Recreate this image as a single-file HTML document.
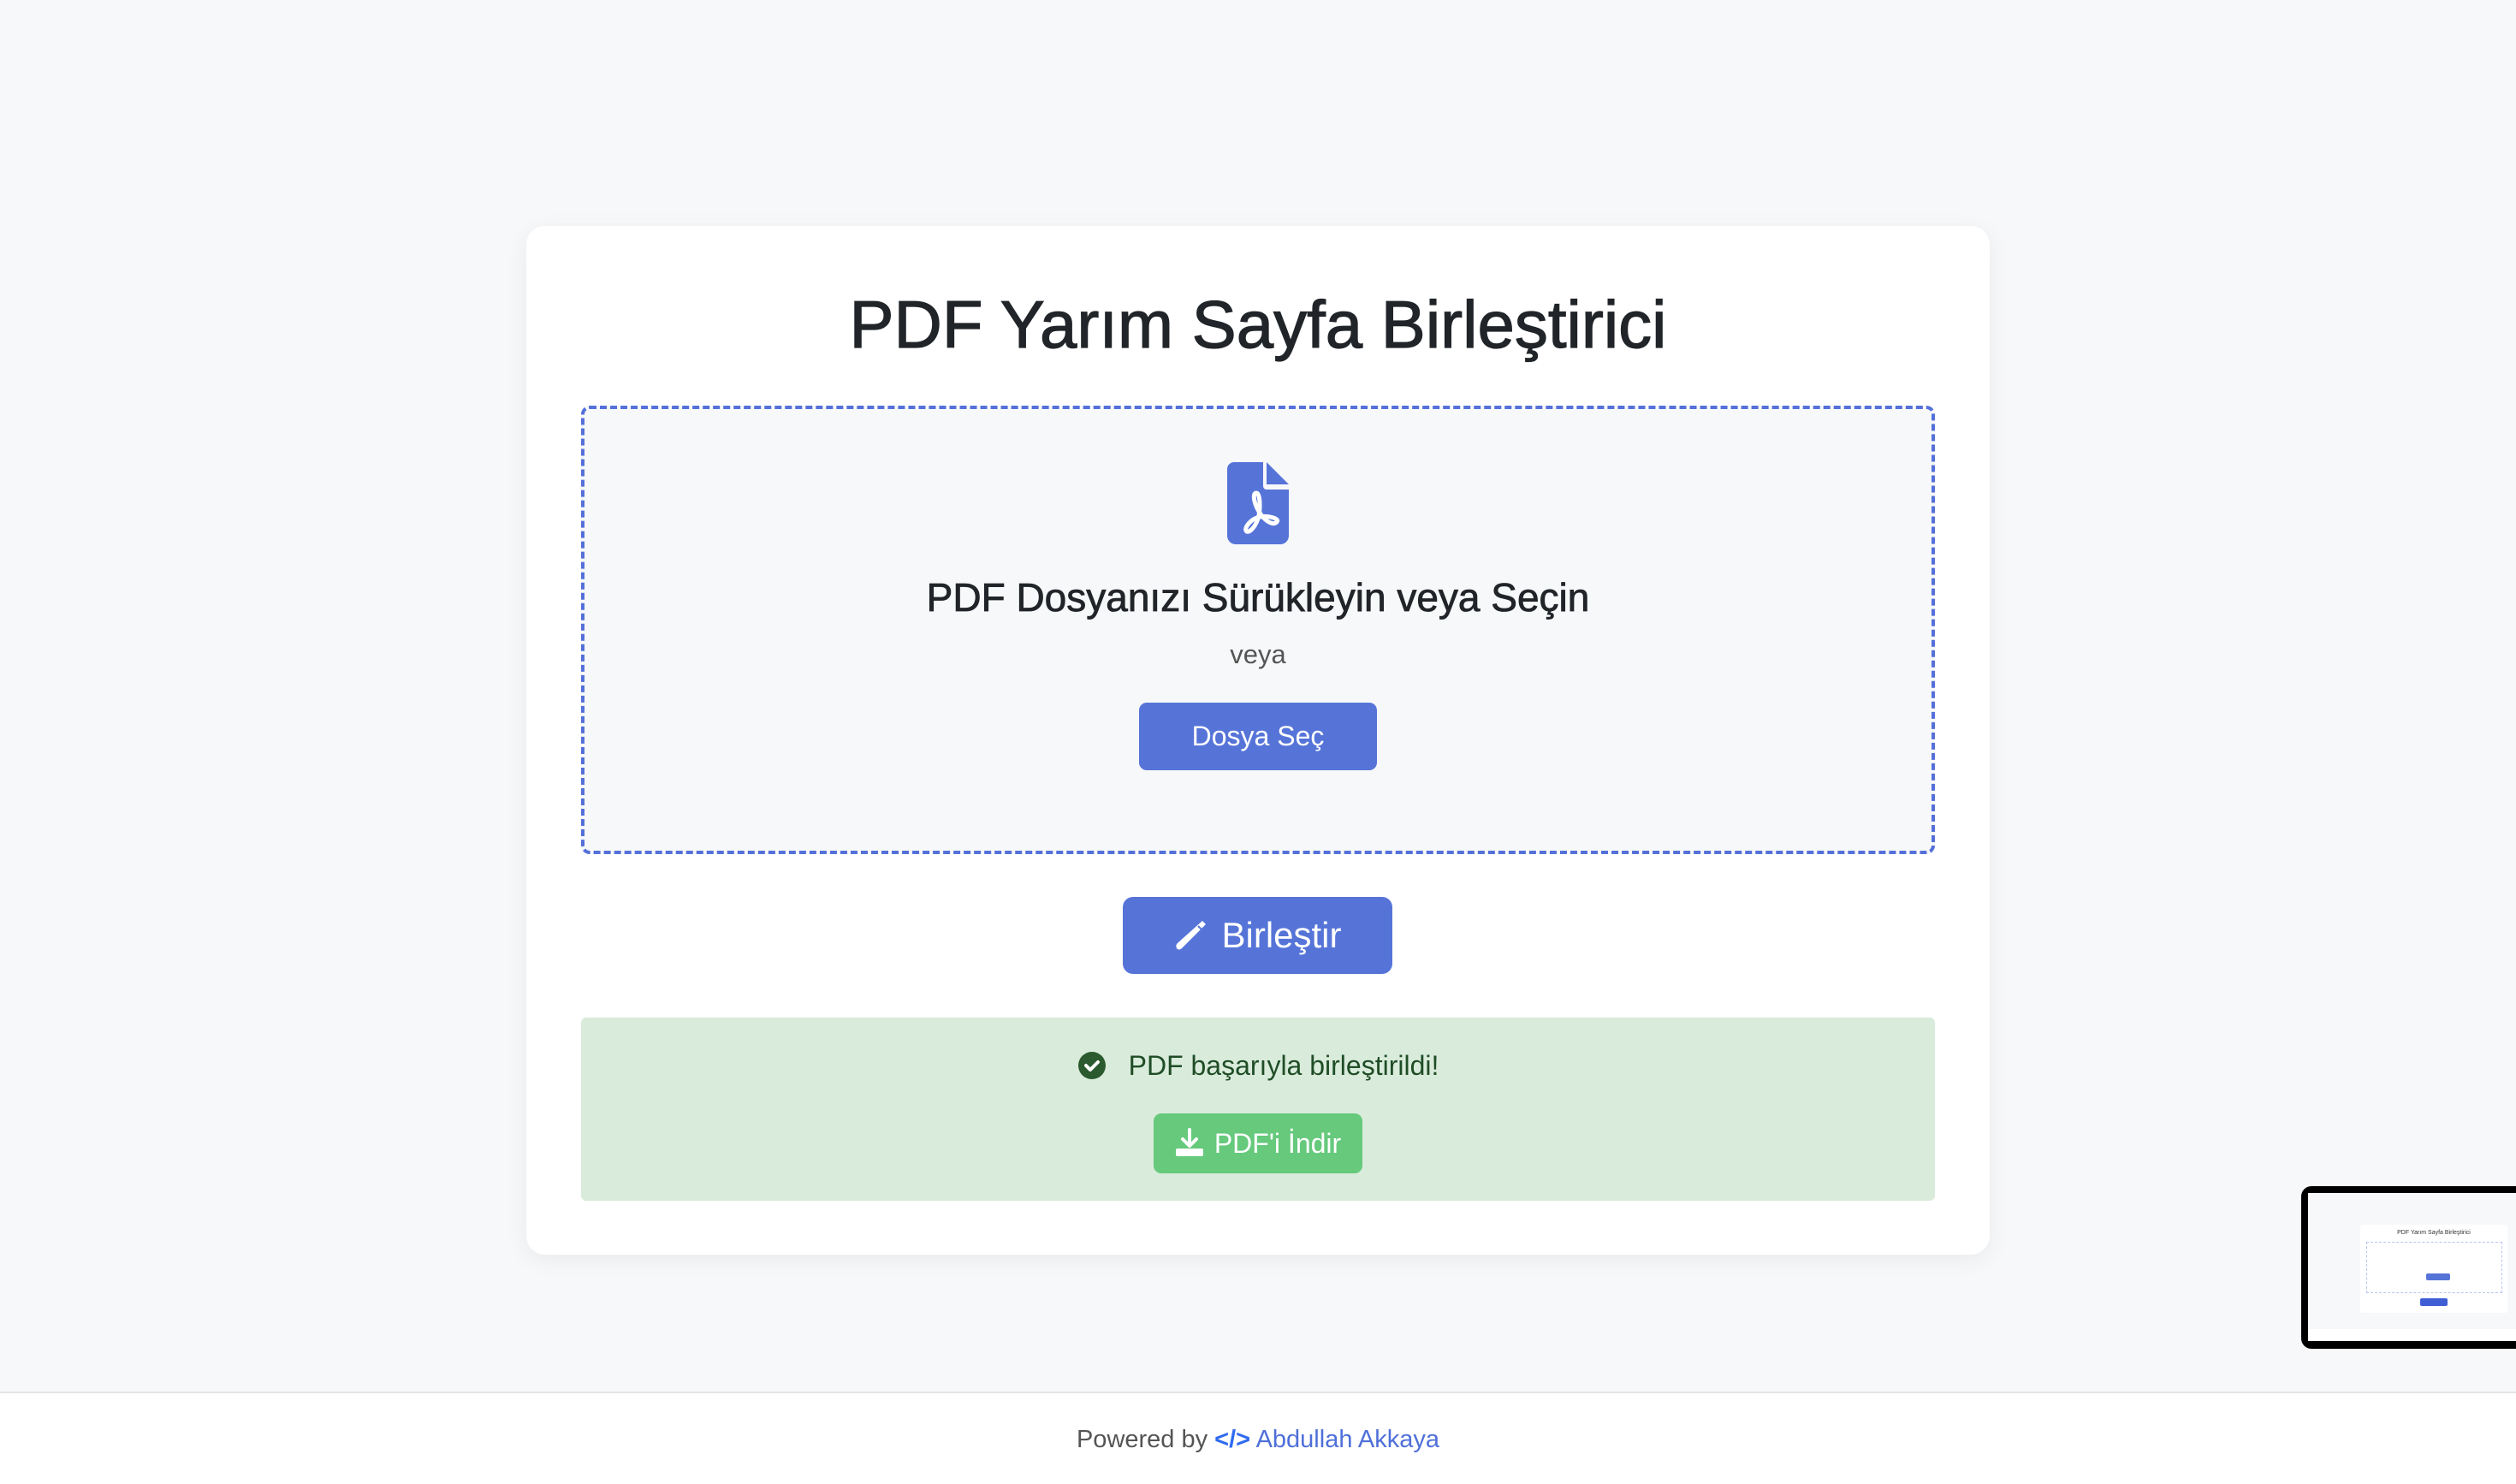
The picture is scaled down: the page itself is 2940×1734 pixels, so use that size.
<!DOCTYPE html>
<html><head><meta charset="utf-8"><style>
*{margin:0;padding:0;box-sizing:border-box}
body{width:2940px;height:1734px;background:#f7f8fa;font-family:"Liberation Sans",sans-serif;position:relative;overflow:hidden;color:#212529}
.a{position:absolute}
.c{text-align:center}
</style></head><body>
<div class="a" style="left:615px;top:264px;width:1710px;height:1202px;background:#fff;border-radius:22px;box-shadow:0 6px 28px rgba(0,0,0,0.06)"></div>
<div class="a c" style="left:615px;top:327px;width:1710px;font-size:78px;line-height:104px;color:#212529;-webkit-text-stroke:1.2px #212529">PDF Yarım Sayfa Birleştirici</div>
<div class="a" style="left:679px;top:474px;width:1582px;height:524px;border:4px dashed #5470d9;border-radius:10px;background:#f7f8fa"></div>
<svg class="a" style="left:1434px;top:540px" width="72" height="96" viewBox="0 0 72 96">
<path d="M8 0H42V28a4 4 0 0 0 4 4H72V86a10 10 0 0 1-10 10H10A10 10 0 0 1 0 86V8A8 8 0 0 1 8 0Z" fill="#5674d8"/>
<path d="M46 0L72 26H46Z" fill="#5674d8"/>
<path d="M34 36c-5 0-3 14 6 26 6 8 14 12 18 8 4-4-10-8-20-6-10 2-18 12-16 16 2 4 10-2 14-14 3-9 3-30-2-30Z" fill="none" stroke="#fff" stroke-width="5" stroke-linejoin="round"/>
</svg>
<div class="a c" style="left:679px;top:668px;width:1582px;font-size:46px;line-height:60px;color:#212529;-webkit-text-stroke:0.8px #212529">PDF Dosyanızı Sürükleyin veya Seçin</div>
<div class="a c" style="left:679px;top:745px;width:1582px;font-size:31px;line-height:40px;color:#555">veya</div>
<div class="a c" style="left:1331px;top:821px;width:278px;height:79px;background:#5674d8;border-radius:9px;color:#fff;font-size:32px;line-height:79px">Dosya Seç</div>
<div class="a c" style="left:1312px;top:1048px;width:315px;height:90px;background:#5674d8;border-radius:12px;color:#fff;font-size:42px;line-height:90px">
<svg style="vertical-align:-6px;margin-right:16px" width="40" height="40" viewBox="0 0 40 40"><path d="M34 3l4 4-28 28c-2 2-5 2-6 0s-1-4 1-6Z" fill="#fff"/><path d="M29 9l4 4" stroke="#5674d8" stroke-width="2"/></svg>Birleştir</div>
<div class="a" style="left:679px;top:1189px;width:1582px;height:214px;background:#d9ebdb;border-radius:6px"></div>
<div class="a c" style="left:679px;top:1224px;width:1582px;font-size:32px;line-height:42px;color:#1f4d26">
<svg style="vertical-align:-6px;margin-right:26px" width="34" height="34" viewBox="0 0 34 34"><circle cx="17" cy="17" r="16" fill="#2a5a2e"/><path d="M10 17l5 5 9-9" fill="none" stroke="#fff" stroke-width="4" stroke-linecap="round" stroke-linejoin="round"/></svg>PDF başarıyla birleştirildi!</div>
<div class="a c" style="left:1348px;top:1301px;width:244px;height:70px;background:#66c97c;border-radius:9px;color:#fff;font-size:32px;line-height:70px">
<svg style="vertical-align:-5px;margin-right:12px" width="34" height="34" viewBox="0 0 34 34"><path d="M17 2v18M9 13l8 8 8-8" fill="none" stroke="#fff" stroke-width="4" stroke-linecap="round" stroke-linejoin="round"/><rect x="1" y="24" width="32" height="9" rx="2" fill="#fff"/></svg>PDF'i İndir</div>
<div class="a" style="left:0;top:1626px;width:2940px;height:108px;background:#fff;border-top:2px solid #e6e6e6"></div>
<div class="a c" style="left:0;top:1664px;width:2940px;font-size:29px;line-height:36px;color:#555">Powered by <span style="color:#2f6bf0;font-weight:bold">&lt;/&gt;</span> <span style="color:#4f6fd9">Abdullah Akkaya</span></div>
<div class="a" style="left:2689px;top:1386px;width:270px;height:190px;background:#000;border-radius:12px"></div>
<div class="a" style="left:2697px;top:1394px;width:260px;height:173px;background:#f7f8fa"></div>
<div class="a" style="left:2758px;top:1431px;width:172px;height:103px;background:#fff;border-radius:3px"></div>
<div class="a c" style="left:2758px;top:1437px;width:172px;font-size:7px;color:#333">PDF Yarım Sayfa Birleştirici</div>
<div class="a" style="left:2765px;top:1451px;width:159px;height:60px;border:1px dashed #b8c4ee"></div>
<div class="a" style="left:2835px;top:1488px;width:28px;height:8px;background:#5674d8;border-radius:2px"></div>
<div class="a" style="left:2828px;top:1517px;width:32px;height:9px;background:#3f5ed6;border-radius:2px"></div>
<div class="a" style="left:2697px;top:1553px;width:260px;height:14px;background:#fff"></div>
</body></html>
